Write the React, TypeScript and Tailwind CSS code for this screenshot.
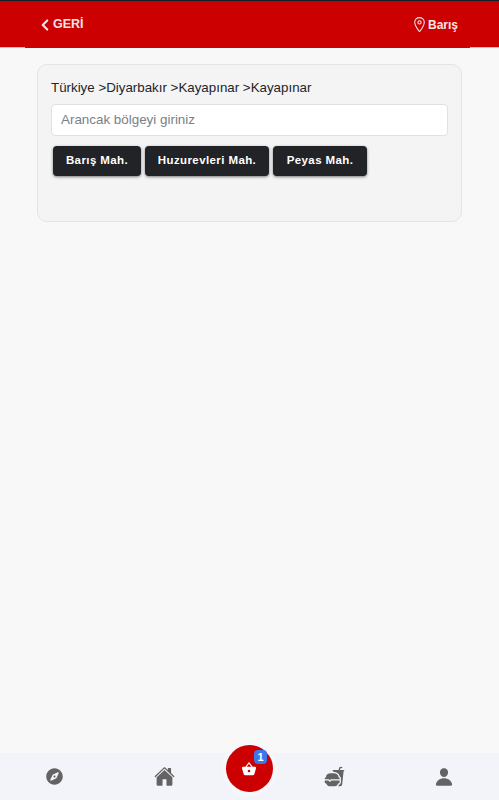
import { FaCompass } from "react-icons/fa";
import { IoBasket, IoChevronBack, IoFastFood, IoHome, IoLocationOutline, IoPerson } from "react-icons/io5";

const areas = [
  { label: "Barış Mah.", width: "w-[88px]" },
  { label: "Huzurevleri Mah.", width: "w-[124px]" },
  { label: "Peyas Mah.", width: "w-[94px]" },
];

export default function App() {
  return (
    <div className="flex h-[800px] w-full flex-col overflow-hidden bg-[#f8f8f8] font-['Liberation_Sans',Arial,sans-serif] text-[13.33px] text-[#212529]">
      <header className="h-[48px] shrink-0 border-y border-t-[#10202a] border-b-[#e9bcbc] bg-[#cc0000]">
        <div className="ml-[25px] mr-[29px] flex h-[47px] items-center justify-between bg-[#cc0000] pl-[13px] pr-[12px] font-bold text-[#f5e6e6]">
          <div className="flex items-center text-[12.5px]">
            <IoChevronBack className="ml-[-1px] text-[16px] [&_path]:[stroke-width:68px]" />
            GERİ
          </div>
          <div className="flex items-center text-[12px]">
            <IoLocationOutline className="text-[17px]" />
            Barış
          </div>
        </div>
      </header>

      <main className="flex-1 px-[37px] pt-[16px]">
        <section className="h-[158px] rounded-[10px] border border-[#e2e4e8] bg-[#f4f4f4] px-[13px] pt-[14px]">
          <div className="h-[25px] leading-[17px]">Türkiye &gt;Diyarbakır &gt;Kayapınar &gt;Kayapınar</div>
          <input
            readOnly
            placeholder="Arancak bölgeyi giriniz"
            className="block h-[32px] w-full rounded-[4px] border border-[#dee2e6] bg-white pb-[2px] pl-[9px] pr-[10px] text-[13.4px] outline-none placeholder:text-[#7a8087]"
          />
          <div className="mt-[10px] flex gap-[4px] pl-[2px]">
            {areas.map((area) => (
              <button
                key={area.label}
                className={`h-[30px] rounded-[4px] bg-[#212327] text-[11.5px] font-bold tracking-[0.4px] text-white shadow-[0_1px_3px_rgba(0,0,0,0.5)] ${area.width}`}
              >
                {area.label}
              </button>
            ))}
          </div>
        </section>
      </main>

      <nav className="relative grid h-[47px] shrink-0 grid-cols-5 items-center bg-[#f3f4f9] text-[#636363]">
        <div className="flex justify-center">
          <FaCompass className="ml-[10px] text-[17px]" />
        </div>
        <div className="flex justify-center">
          <IoHome className="mr-[-30px] text-[21px]" />
        </div>
        <div className="flex justify-center">
          <div className="relative mt-[-16px] flex h-[47px] w-[47px] items-center justify-center rounded-full bg-[#cc0000] text-white shadow-[0_0_0_4px_#f6f7fa]">
            <IoBasket className="text-[18px]" />
            <span className="absolute right-[6px] top-[5px] flex h-[14px] w-[13px] items-center justify-center rounded-[4px] bg-[#3b76ee] text-[11px] font-bold leading-none text-white">
              1
            </span>
          </div>
        </div>
        <div className="flex justify-center">
          <IoFastFood className="ml-[-29px] text-[21px]" />
        </div>
        <div className="flex justify-center">
          <IoPerson className="ml-[-11px] text-[20px]" />
        </div>
      </nav>
    </div>
  );
}
